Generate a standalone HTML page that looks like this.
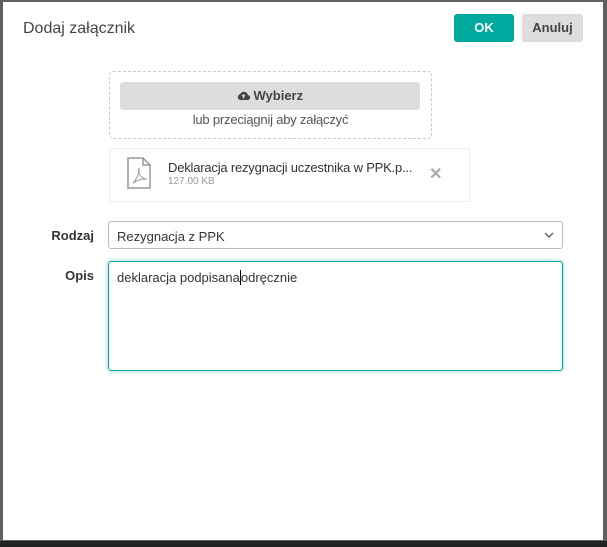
<!DOCTYPE html>
<html><head><style>
*{box-sizing:border-box;margin:0;padding:0}
body{width:607px;height:547px;background:#5f5f5f;position:relative;overflow:hidden;font-family:"Liberation Sans",sans-serif;color:#333}
.dlg{position:absolute;left:3px;top:2px;width:600px;height:538px;background:#fff}
.bot{position:absolute;left:0;top:541px;width:607px;height:6px;background:#222}
.a{position:absolute}
.title{left:20px;top:18px;font-size:16px;color:#444}
.btn{border-radius:3px;font-size:13px;font-weight:bold;text-align:center;line-height:27px;height:28px;top:12px}
.ok{left:451px;width:60px;background:#00a99d;color:#fff}
.cancel{left:519px;width:61px;background:#ddd;color:#444}
.drop{left:106px;top:69px;width:323px;height:68px;border:1px dashed #ccc;border-radius:4px}
.wyb{left:117px;top:80px;width:300px;height:28px;background:#ddd;border-radius:3px;font-size:13px;font-weight:bold;text-align:center;line-height:28px;color:#444}
.lub{left:106px;top:110px;width:323px;text-align:center;font-size:13px;color:#555;letter-spacing:-0.2px}
.card{left:106px;top:146px;width:361px;height:54px;border:1px solid #eee}
.fn{left:165px;top:158px;font-size:13px;color:#333;letter-spacing:-0.2px}
.fs{left:165px;top:174px;font-size:10px;color:#999}
.lbl{font-size:13px;font-weight:bold;color:#333;text-align:right;width:90px;left:1px}
.sel{left:105px;top:219px;width:455px;height:28px;border:1px solid #bbb;border-radius:3px;font-size:13px;padding:7px 8px;color:#333}
.ta{left:105px;top:259px;width:455px;height:110px;border:1px solid #00a99d;border-radius:3px;box-shadow:0 0 4px rgba(0,169,157,.5);font-size:13px;padding:8px 8px;color:#333}
</style></head><body>
<div class="dlg">
<div class="a title">Dodaj załącznik</div>
<div class="a btn ok">OK</div>
<div class="a btn cancel">Anuluj</div>
<div class="a drop"></div>
<div class="a wyb"><svg width="13" height="11" viewBox="0 0 13 11" style="vertical-align:-1px"><path d="M3 10h7.5a2.5 2.5 0 0 0 .3-5A4 4 0 0 0 3.2 4.2 3 3 0 0 0 3 10z" fill="#444"/><path d="M6.5 8.5V5M5 6.3l1.5-1.5 1.5 1.5" stroke="#ddd" stroke-width="1.2" fill="none"/></svg> Wybierz</div>
<div class="a lub">lub przeciągnij aby załączyć</div>
<div class="a card"></div>
<svg class="a" style="left:124px;top:155px" width="24" height="32" viewBox="0 0 24 32"><path d="M1 1h15l7 7v23H1z M16 1v7h7" fill="none" stroke="#999" stroke-width="1.5"/><path d="M6 26c3-3 6-9 6-13s-1 0-0 3 4 6 7 6-6-1-13 4z" fill="none" stroke="#999" stroke-width="1"/></svg>
<div class="a fn">Deklaracja rezygnacji uczestnika w PPK.p...</div>
<div class="a fs">127.00 KB</div>
<div class="a" style="left:426px;top:162px;font-size:16px;color:#aaa;font-weight:bold">✕</div>
<div class="a lbl" style="top:226px">Rodzaj</div>
<div class="a sel">Rezygnacja z PPK<svg style="position:absolute;right:8px;top:10px" width="10" height="7" viewBox="0 0 10 7"><path d="M1 1l4 4 4-4" stroke="#555" stroke-width="1.3" fill="none"/></svg></div>
<div class="a lbl" style="top:266px">Opis</div>
<div class="a ta">deklaracja podpisana<span style="border-left:1px solid #000;margin-left:0"></span>odręcznie</div>
</div>
<div class="bot"></div>
</body></html>
